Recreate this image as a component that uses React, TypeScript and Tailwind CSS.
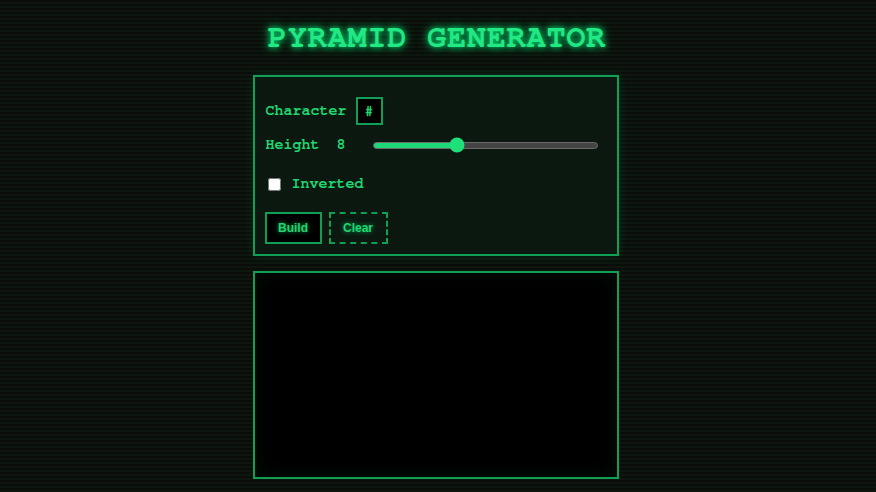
import React, { useState } from 'react'

export default function App() {
  const [height] = useState(8)
  const [inverted, setInverted] = useState(false)
  const pct = 37.5

  return (
    <div className="min-h-screen w-full bg-[repeating-linear-gradient(to_bottom,#0a0d0a_0px,#0a0d0a_2px,#0d170f_2px,#0d170f_4px)] pr-[5px] font-['Nimbus_Mono_PS','Nimbus_Mono_L','FreeMono','Courier_New','Liberation_Mono',monospace] text-[#1fd872]">
      <div className="mx-auto flex w-[366px] flex-col items-center pt-[17px]">
        <h1 className="ml-[3px] whitespace-nowrap text-[32px] leading-[40px] font-bold tracking-[0.7px] text-[#22e884] [text-shadow:0_0_6px_#00e676,0_0_12px_rgba(0,230,118,0.5)]">
          PYRAMID GENERATOR
        </h1>

        <div className="mt-[18px] w-full border-2 border-[#0f9f55] bg-[#0c1a12]/80 pl-[11px] pr-[10px] pt-[20px] pb-[10px] shadow-[0_0_10px_rgba(0,230,118,0.12)]">
          <div className="flex items-center gap-[9px]">
            <span className="text-[15px] font-bold">Character</span>
            <div className="flex h-[28px] w-[27px] items-center justify-center border-2 border-[#0f9f55] bg-black text-[14px] font-bold">
              #
            </div>
          </div>

          <div className="mt-[12px] flex h-[16px] items-center">
            <span className="w-[71px] text-[15px] font-bold">Height</span>
            <span className="w-[36px] text-[15px] font-bold">{height}</span>
            <div className="relative h-[7px] w-[225px] rounded-full border border-[#6a6a6a] bg-[#444]">
              <div className="h-full rounded-full bg-[#1ed877]" style={{ width: `${pct}%` }} />
              <div
                className="absolute top-1/2 h-[15px] w-[15px] -translate-x-1/2 -translate-y-1/2 rounded-full bg-[#1ee07a]"
                style={{ left: `${pct}%` }}
              />
            </div>
          </div>

          <label className="mt-[20px] ml-[2px] flex items-center gap-[11px]">
            <input
              type="checkbox"
              checked={inverted}
              onChange={(e) => setInverted(e.target.checked)}
              className="m-0 h-[13px] w-[13px]"
            />
            <span className="text-[15px] font-bold">Inverted</span>
          </label>

          <div className="-ml-[1px] mt-[16px] flex gap-[7px] font-['Liberation_Sans',sans-serif]">
            <button className="h-[32px] w-[57px] border-2 border-[#0f9f55] bg-black text-[12px] font-bold text-[#1fd872] [text-shadow:0_0_5px_rgba(0,230,118,0.7)]">
              Build
            </button>
            <button className="h-[32px] w-[59px] border-2 border-dashed border-[#0f9f55] bg-transparent text-[12px] font-bold text-[#1fd872] [text-shadow:0_0_5px_rgba(0,230,118,0.7)]">
              Clear
            </button>
          </div>
        </div>

        <div className="mt-[15px] h-[208px] w-full border-2 border-[#0f9f55] bg-black shadow-[inset_0_0_20px_rgba(0,230,118,0.07)]" />
      </div>
    </div>
  )
}
